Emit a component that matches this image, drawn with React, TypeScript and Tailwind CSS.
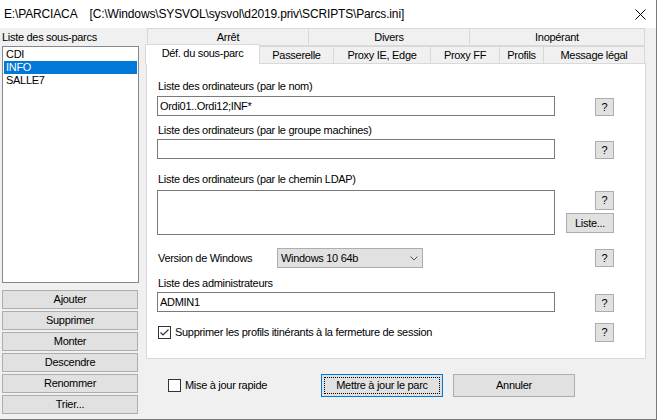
import { useState } from 'react';

const FONT = { fontFamily: '"Liberation Sans", Arial, sans-serif' };

const SUB_PARCS = ['CDI', 'INFO', 'SALLE7'];
const LEFT_BUTTONS = ['Ajouter', 'Supprimer', 'Monter', 'Descendre', 'Renommer', 'Trier...'];

const TOP_TABS = [
  { label: 'Arrêt', w: 'w-[162px]' },
  { label: 'Divers', w: 'w-[162px]' },
  { label: 'Inopérant', w: 'w-[176px]' },
];

const BOTTOM_TABS = [
  { label: 'Passerelle', w: 'w-[75px]' },
  { label: 'Proxy IE, Edge', w: 'w-[98px]' },
  { label: 'Proxy FF', w: 'w-[70px]' },
  { label: 'Profils', w: 'w-[45px]' },
  { label: 'Message légal', w: 'w-[102px]' },
];

function HelpButton({ className = '' }: { className?: string }) {
  return (
    <button
      type="button"
      className={`flex h-[18px] w-[19px] items-center justify-center border border-[#adadad] bg-[#e1e1e1] text-[11px] text-black ${className}`}
    >
      ?
    </button>
  );
}

function CheckBox({ checked }: { checked: boolean }) {
  return (
    <span className="flex h-[13px] w-[13px] shrink-0 items-center justify-center border border-[#333333] bg-white">
      {checked && (
        <svg width="11" height="11" viewBox="0 0 11 11">
          <polyline points="1.5,5.5 4,8 9.5,2.5" fill="none" stroke="#333333" strokeWidth="1.2" />
        </svg>
      )}
    </span>
  );
}

function TextRow({ value }: { value: string }) {
  return (
    <div className="flex h-[20px]">
      <div className="flex h-[20px] w-[398px] items-center border border-[#7a7a7a] bg-white px-[2px] text-[11px]">
        {value}
      </div>
      <div className="ml-[11px] flex w-[48px] justify-end pt-[2px]">
        <HelpButton />
      </div>
    </div>
  );
}

export default function App() {
  const [selected, setSelected] = useState('INFO');
  const [dropProfiles, setDropProfiles] = useState(true);
  const [quickUpdate, setQuickUpdate] = useState(false);

  return (
    <div style={FONT} className="flex h-[420px] w-[657px] flex-col overflow-hidden border-r border-b border-[#7a7a7a] bg-[#f0f0f0] text-[11px] tracking-[-0.3px] text-black">
      <div className="flex h-[28px] shrink-0 items-center justify-between bg-white pl-[4px] pr-[10px]">
        <span className="whitespace-pre text-[12px] tracking-[-0.15px]">E:\PARCIACA    [C:\Windows\SYSVOL\sysvol\d2019.priv\SCRIPTS\Parcs.ini]</span>
        <svg width="11" height="11" viewBox="0 0 11 11">
          <path d="M0.5 0.5 L10.5 10.5 M10.5 0.5 L0.5 10.5" stroke="#000" strokeWidth="1" />
        </svg>
      </div>

      <div className="flex flex-1">
        <div className="ml-[2px] flex w-[137px] flex-col">
          <div className="h-[18px] leading-[18px]">Liste des sous-parcs</div>
          <div className="flex h-[237px] flex-col border border-[#828790] bg-white px-px pt-px">
            {SUB_PARCS.map((item) => (
              <div
                key={item}
                onClick={() => setSelected(item)}
                className={`h-[13px] pl-[2px] leading-[13px] ${selected === item ? 'bg-[#0078d7] text-white' : ''}`}
              >
                {item}
              </div>
            ))}
          </div>
          <div className="mt-[7px] flex flex-col gap-[2px]">
            {LEFT_BUTTONS.map((label) => (
              <button
                key={label}
                type="button"
                className="flex h-[19px] w-[136px] items-center justify-center border border-[#adadad] bg-[#e1e1e1]"
              >
                {label}
              </button>
            ))}
          </div>
        </div>

        <div className="ml-[6px] flex w-[501px] flex-col">
          <div className="ml-[2px] flex h-[18px]">
            {TOP_TABS.map((tab, i) => (
              <div
                key={tab.label}
                className={`flex h-[18px] items-center justify-center border border-[#d9d9d9] bg-[#f0f0f0] ${tab.w} ${i > 0 ? '-ml-px' : ''}`}
              >
                {tab.label}
              </div>
            ))}
          </div>
          <div className="flex h-[17px] items-end">
            <div className="relative z-10 -mb-px flex h-[20px] w-[115px] items-center justify-center border border-b-0 border-[#d9d9d9] bg-white pb-[2px]">
              Déf. du sous-parc
            </div>
            {BOTTOM_TABS.map((tab) => (
              <div
                key={tab.label}
                className={`-ml-px flex h-[17px] items-center justify-center border border-b-0 border-[#d9d9d9] bg-[#f0f0f0] ${tab.w}`}
              >
                {tab.label}
              </div>
            ))}
          </div>

          <div className="ml-px flex h-[296px] w-[500px] flex-col border border-[#d9d9d9] bg-white pl-[10px] pt-[16px]">
            <div className="flex w-[457px] flex-col">
              <div className="ml-px h-[13px] leading-[13px]">Liste des ordinateurs (par le nom)</div>
              <div className="mt-[3px]">
                <TextRow value="Ordi01..Ordi12;INF*" />
              </div>

              <div className="ml-px mt-[8px] h-[13px] leading-[13px]">Liste des ordinateurs (par le groupe machines)</div>
              <div className="mt-[2px]">
                <TextRow value="" />
              </div>

              <div className="ml-px mt-[14px] h-[13px] leading-[13px]">Liste des ordinateurs (par le chemin LDAP)</div>
              <div className="mt-[4px] flex h-[45px]">
                <div className="h-[45px] w-[398px] border border-[#7a7a7a] bg-white" />
                <div className="ml-[11px] flex w-[48px] flex-col items-end">
                  <HelpButton className="mt-[1px] h-[19px]" />
                  <button
                    type="button"
                    className="mt-[3px] flex h-[20px] w-[48px] items-center justify-center border border-[#adadad] bg-[#e1e1e1]"
                  >
                    Liste...
                  </button>
                </div>
              </div>

              <div className="mt-[13px] flex h-[20px] items-center">
                <span className="ml-px w-[119px]">Version de Windows</span>
                <div className="flex h-[20px] w-[146px] items-center justify-between border border-[#adadad] bg-[#e1e1e1] pl-[3px] pr-[4px]">
                  <span>Windows 10 64b</span>
                  <svg width="8" height="5" viewBox="0 0 8 5">
                    <polyline points="0.5,0.5 4,4 7.5,0.5" fill="none" stroke="#555" strokeWidth="1" />
                  </svg>
                </div>
                <div className="ml-auto flex w-[48px] justify-end">
                  <HelpButton />
                </div>
              </div>

              <div className="ml-px mt-[9px] h-[13px] leading-[13px]">Liste des administrateurs</div>
              <div className="mt-[2px]">
                <TextRow value="ADMIN1" />
              </div>

              <div className="mt-[11px] flex h-[19px] items-center">
                <div className="ml-px flex items-center gap-[4px]" onClick={() => setDropProfiles(!dropProfiles)}>
                  <CheckBox checked={dropProfiles} />
                  <span>Supprimer les profils itinérants à la fermeture de session</span>
                </div>
                <div className="ml-auto flex w-[48px] justify-end">
                  <HelpButton className="h-[19px]" />
                </div>
              </div>
            </div>
          </div>

          <div className="mt-[15px] flex h-[23px] items-center">
            <div className="ml-[23px] flex w-[153px] items-center gap-[4px]" onClick={() => setQuickUpdate(!quickUpdate)}>
              <CheckBox checked={quickUpdate} />
              <span>Mise à jour rapide</span>
            </div>
            <button type="button" className="h-[23px] w-[122px] border border-[#0078d7] bg-[#e1e1e1] p-[2px]">
              <span className="flex h-full w-full items-center justify-center border border-dotted border-black">
                Mettre à jour le parc
              </span>
            </button>
            <button
              type="button"
              className="ml-[10px] flex h-[23px] w-[122px] items-center justify-center border border-[#adadad] bg-[#e1e1e1]"
            >
              Annuler
            </button>
          </div>
        </div>
      </div>
    </div>
  );
}
